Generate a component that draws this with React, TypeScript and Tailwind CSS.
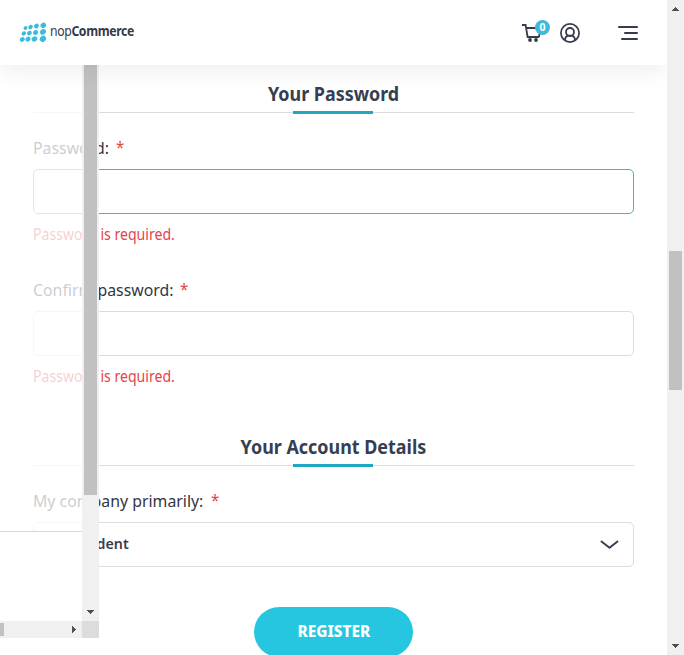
import React from "react";

function Arrow({ dir }: { dir: "up" | "down" | "right" }) {
  const d = { up: "M0 4h7L3.5 0z", down: "M0 0h7L3.5 4z", right: "M0 0v7l4-3.5z" }[dir];
  return (
    <svg width="7" height="7" viewBox="0 0 7 7" className="block" shapeRendering="crispEdges">
      <path d={d} fill="#505050" />
    </svg>
  );
}

function Logo() {
  const dots: [number, number, number][] = [
    [5.5, 6, 1.8], [10.6, 5, 2.1], [16.4, 4.1, 2.3], [23.3, 3.4, 2.6],
    [3.8, 11.4, 2.1], [9.4, 11, 2.2], [15.6, 10.5, 2.4], [23, 9.9, 2.8],
    [2.3, 17.4, 2.3], [8, 17.2, 2.4], [14.5, 17, 2.6], [22.9, 16.8, 3],
  ];
  return (
    <svg width="28" height="21" viewBox="0 0 28 21" className="block">
      {dots.map(([x, y, r], i) => (
        <ellipse key={i} cx={x} cy={y} rx={r + 0.3} ry={r - 0.1} fill="#3dbbda" transform={`rotate(-35 ${x} ${y})`} />
      ))}
    </svg>
  );
}

function Heading({ text }: { text: string }) {
  return (
    <div className="relative h-[31px] border-b border-[#dcdcdc] text-center">
      <h2 className="-mt-px inline-block scale-x-[0.943] whitespace-nowrap text-[19px] leading-[26px] font-bold text-[#363e51]">{text}</h2>
      <div className="absolute -bottom-[2px] left-[260px] h-[3px] w-20 bg-[#1fa8c2]" />
    </div>
  );
}

function Label({ text, width }: { text: string; width: string }) {
  return (
    <div className="flex h-[26px] items-start text-[17px] leading-[26px] whitespace-nowrap text-[#33363f]">
      <span className={`block ${width}`}>
        <span className="inline-block origin-left scale-x-[0.932]">{text}</span>
      </span>
      <span className="-mt-px inline-block origin-left scale-x-[0.88] text-[#e4434b]">*</span>
    </div>
  );
}

function ErrorText() {
  return (
    <div className="h-[22px] text-[15.5px] leading-[22px] whitespace-nowrap text-[#e4434b]">
      <span className="inline-block origin-left scale-x-[0.909]">Password is required.</span>
    </div>
  );
}

function Header() {
  return (
    <header className="relative z-20 flex h-[65px] w-[667px] items-start bg-white pt-[22px] pl-5 shadow-[0_5px_25px_rgba(0,0,0,0.075)]">
      <Logo />
      <div className="ml-[2px] h-5 w-[90px] text-[13.5px] leading-[19px] whitespace-nowrap text-[#333b4c]">
        <span className="inline-block origin-left scale-x-[0.905] tracking-[-0.4px]">
          nop<b>Commerce</b>
        </span>
      </div>
      <svg width="30" height="24" viewBox="0 0 30 24" className="-mt-[3px] ml-[381px] block overflow-visible">
        <path d="M1 6h3.6l2 12H18M5.3 9H15M18 18l.7-4" fill="none" stroke="#363b4e" strokeWidth="1.8" />
        <circle cx="9" cy="21" r="1.9" fill="#363b4e" />
        <circle cx="15" cy="21" r="1.9" fill="#363b4e" />
        <circle cx="21.5" cy="8.5" r="7.5" fill="#3dbbda" />
        <text x="21.5" y="12.2" textAnchor="middle" fontSize="10.5" fontWeight="700" fill="#fff">0</text>
      </svg>
      <svg width="20" height="20" viewBox="0 0 20 20" className="mt-[1px] ml-[9px] block" fill="none" stroke="#363b4e">
        <circle cx="10" cy="10" r="9.1" strokeWidth="1.7" />
        <circle cx="10" cy="9" r="4" strokeWidth="1.8" />
        <path d="M5 17.3c0-2.4 1.2-4 3-4.6h4c1.8.6 3 2.2 3 4.6" strokeWidth="1.8" />
      </svg>
      <div className="mt-1 ml-[38px] flex w-5 flex-col items-end gap-1">
        <i className="h-[2px] w-5 rounded-full bg-[#363b4e]" />
        <i className="h-[2px] w-[14px] rounded-full bg-[#363b4e]" />
        <i className="h-[2px] w-[17px] rounded-full bg-[#363b4e]" />
      </div>
    </header>
  );
}

function PageScrollbar() {
  return (
    <div className="relative z-20 flex h-full w-[17px] flex-col items-center bg-[#f0f0f0]">
      <div className="h-[251px] pt-[7px]"><Arrow dir="up" /></div>
      <div className="h-[139px] w-[13px] bg-[#c1c1c1]" />
      <div className="mt-auto h-[11px]"><Arrow dir="down" /></div>
    </div>
  );
}

function FloatingPanel() {
  return (
    <div className="absolute top-[65px] left-0 z-10 flex h-[573px] w-[99px] flex-col">
      <div className="flex h-[556px]">
        <div className="flex w-[82px] flex-col">
          <div className="h-[466px] bg-white/75" />
          <div className="flex-1 border-t border-[#d6d4e0] bg-white" />
        </div>
        <div className="flex w-[17px] flex-col items-center bg-[#f0f0f0]">
          <div className="h-[430px] w-[13px] bg-[#c1c1c1]" />
          <div className="mt-auto h-[11px]"><Arrow dir="down" /></div>
        </div>
      </div>
      <div className="flex h-[17px] items-center bg-[#f0f0f0]">
        <div className="h-[13px] w-1 bg-[#c1c1c1]" />
        <div className="ml-auto w-[10px]"><Arrow dir="right" /></div>
        <div className="h-[17px] w-[17px] bg-[#dcdcdc]" />
      </div>
    </div>
  );
}

export default function App() {
  return (
    <div className="relative flex h-[655px] w-[684px] overflow-hidden bg-white font-['Noto_Sans',sans-serif]">
      <div className="h-full w-[667px]">
        <Header />
        <main className="ml-[33px] w-[601px] pt-[17px]">
          <Heading text="Your Password" />
          <div className="pt-[22px]"><Label text="Password:" width="w-[83px]" /></div>
          <div className="mt-[8px] h-[45px] rounded-[5px] border border-[#28bfd9] bg-white" />
          <div className="mt-[9px]"><ErrorText /></div>
          <div className="pt-[32px]"><Label text="Confirm password:" width="w-[147px]" /></div>
          <div className="mt-[8px] h-[45px] rounded-[5px] border border-[#dcdcdc] bg-white" />
          <div className="mt-[9px]"><ErrorText /></div>
          <div className="pt-[48px]"><Heading text="Your Account Details" /></div>
          <div className="pt-[22px]"><Label text="My company primarily:" width="w-[178px]" /></div>
          <div className="mt-[8px] flex h-[45px] items-center rounded-[5px] border border-[#dcdcdc] bg-white pr-[14px]">
            <div className="-mt-[3px] w-[95px] text-right text-[15px] leading-[22px] font-semibold text-[#363e51]">
              <span className="inline-block origin-right scale-x-[0.95]">Student</span>
            </div>
            <svg width="19" height="10" viewBox="0 0 19 10" className="ml-auto block" fill="none" stroke="#363b4e" strokeWidth="1.9">
              <path d="M1.5 1.5l8 6.3 8-6.3" strokeLinecap="round" strokeLinejoin="round" />
            </svg>
          </div>
          <button className="mx-auto mt-10 flex h-[50px] w-[159px] items-center justify-center rounded-full bg-[#26c6e0] text-[16px] font-extrabold text-white">
            <span className="-mt-[2px] inline-block scale-x-[0.96]">REGISTER</span>
          </button>
        </main>
      </div>
      <PageScrollbar />
      <FloatingPanel />
    </div>
  );
}
